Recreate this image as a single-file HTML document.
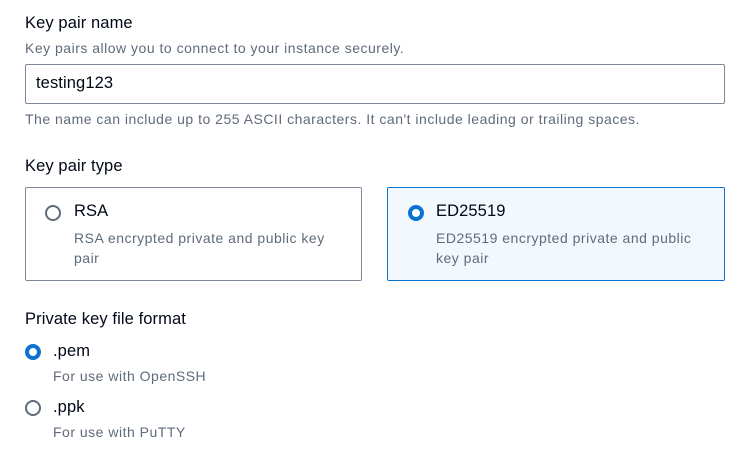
<!DOCTYPE html>
<html><head><meta charset="utf-8"><style>
body{margin:0;width:745px;height:465px;background:#fff;font-family:"Liberation Sans",sans-serif;position:relative;overflow:hidden;color:#000716}
.a{position:absolute;white-space:nowrap}
.h{font-size:16.5px;color:#000716;letter-spacing:0.1px}
.s{font-size:14px;color:#5f6b7a;letter-spacing:0.5px}
.card{position:absolute;box-sizing:border-box;border:1px solid #7d8998;border-radius:2px;top:187px;height:94px}
.r{position:absolute;box-sizing:border-box;width:16px;height:16px;border-radius:50%;border:2px solid #5f6b7a;background:#fff}
.r.on{border:4.5px solid #0972d3}
</style></head><body>
<div class="a h" style="left:25px;top:14px">Key pair name</div>
<div class="a s" style="left:25px;top:40px">Key pairs allow you to connect to your instance securely.</div>
<div style="position:absolute;left:25px;top:64px;width:700px;height:40px;box-sizing:border-box;border:1px solid #7d8998;border-radius:2px"></div>
<div class="a h" style="left:36px;top:74px">testing123</div>
<div class="a s" style="left:25px;top:111px">The name can include up to 255 ASCII characters. It can't include leading or trailing spaces.</div>

<div class="a h" style="left:25px;top:157px">Key pair type</div>
<div class="card" style="left:25px;width:337px"></div>
<div class="r" style="left:45px;top:205px"></div>
<div class="a h" style="left:74px;top:202px">RSA</div>
<div class="a s" style="left:74px;top:228px;line-height:20px">RSA encrypted private and public key<br>pair</div>
<div class="card" style="left:387px;width:338px;border-color:#0972d3;background:#f2f8fd"></div>
<div class="r on" style="left:408px;top:205px"></div>
<div class="a h" style="left:436px;top:202px">ED25519</div>
<div class="a s" style="left:436px;top:228px;line-height:20px">ED25519 encrypted private and public<br>key pair</div>

<div class="a h" style="left:25px;top:310px">Private key file format</div>
<div class="r on" style="left:25px;top:344px"></div>
<div class="a h" style="left:53px;top:342px">.pem</div>
<div class="a s" style="left:53px;top:368px">For use with OpenSSH</div>
<div class="r" style="left:25px;top:400px"></div>
<div class="a h" style="left:53px;top:398px">.ppk</div>
<div class="a s" style="left:53px;top:424px">For use with PuTTY</div>
</body></html>
